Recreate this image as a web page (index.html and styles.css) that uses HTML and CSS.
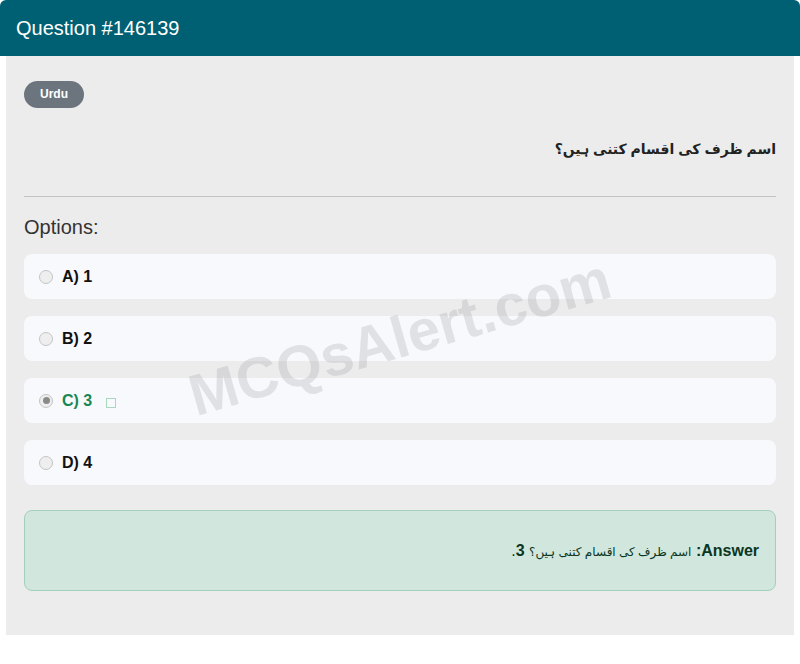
FILE: index.html
```html
<!DOCTYPE html>
<html lang="en">
<head>
<meta charset="utf-8">
<title>Question #146139</title>
<link rel="stylesheet" href="styles.css">
</head>
<body>
<div class="card">
  <div class="card-header">Question #146139</div>
  <div class="card-body">
    <span class="badge">Urdu</span>
    <h2 class="question" dir="rtl">اسم ظرف کی اقسام کتنی ہیں؟</h2>
    <hr class="divider">
    <div class="options-title">Options:</div>
    <div class="options">
      <label class="option"><span class="radio"></span><span class="opt-text">A) 1</span></label>
      <label class="option"><span class="radio"></span><span class="opt-text">B) 2</span></label>
      <label class="option correct"><span class="radio checked"></span><span class="opt-text">C) 3</span><span class="tofu"></span></label>
      <label class="option"><span class="radio"></span><span class="opt-text">D) 4</span></label>
    </div>
    <div class="answer" dir="rtl"><p class="answer-line"><strong>Answer:</strong> <span class="answer-ur">اسم ظرف کی اقسام کتنی ہیں؟</span> <strong>3</strong>.</p></div>
    <div class="watermark">MCQsAlert.com</div>
  </div>
  <div class="card-foot"></div>
</div>
</body>
</html>
```
FILE: styles.css
```css
html, body {
  margin: 0;
  padding: 0;
  background: #ffffff;
  font-family: "Liberation Sans", Arial, "DejaVu Sans", sans-serif;
}
.card {
  width: 800px;
}
.card-header {
  height: 56px;
  box-sizing: border-box;
  background: #006073;
  color: #ffffff;
  font-size: 20px;
  padding: 17px 16px 0;
  border-radius: 6px 6px 0 0;
}
.card-body {
  position: relative;
  margin: 0 6px;
  background: #ececec;
  padding: 25px 18px 44px;
  overflow: hidden;
}
.badge {
  display: inline-block;
  background: #6c757d;
  color: #fff;
  font-size: 12px;
  font-weight: bold;
  width: 60px;
  height: 27px;
  line-height: 27px;
  text-align: center;
  border-radius: 14px;
}
.question {
  margin: 26px 0 0;
  font-size: 14px;
  font-weight: bold;
  color: #222;
  text-align: right;
  line-height: 30px;
}
.divider {
  border: 0;
  border-top: 1px solid #c4c4c4;
  margin: 32px 0 0;
}
.options-title {
  margin-top: 18px;
  font-size: 20px;
  color: #333;
  line-height: 24px;
}
.options {
  margin-top: 15px;
  display: flex;
  flex-direction: column;
  gap: 17px;
}
.option {
  display: flex;
  align-items: center;
  height: 45px;
  background: #f8f9fc;
  border-radius: 8px;
  padding-left: 15px;
  font-weight: bold;
  font-size: 16px;
  color: #111;
}
.radio {
  width: 14px;
  height: 14px;
  border-radius: 50%;
  border: 1px solid #c4c4c4;
  background: #eeeeee;
  box-sizing: border-box;
  margin-right: 9px;
  display: flex;
  align-items: center;
  justify-content: center;
}
.radio.checked::after {
  content: "";
  width: 7px;
  height: 7px;
  border-radius: 50%;
  background: #8a8a8a;
}
.correct .opt-text {
  color: #198754;
}
.tofu {
  width: 8px;
  height: 8px;
  border: 1px solid #a8d8bd;
  margin-left: 14px;
  margin-top: 4px;
}
.answer {
  margin-top: 25px;
  background: #d1e7dd;
  border: 1px solid #a3cfbb;
  border-radius: 8px;
  height: 81px;
  box-sizing: border-box;
  padding: 0 16px;
  display: flex;
  align-items: center;
  color: #0a3622;
}
.answer-line {
  margin: 0;
  font-size: 16px;
}
.answer-ur {
  font-size: 12px;
}
.watermark {
  position: absolute;
  left: 176px;
  top: 247px;
  font-size: 58px;
  font-weight: bold;
  color: rgba(140, 142, 150, 0.22);
  transform: rotate(-16deg);
  transform-origin: center;
  pointer-events: none;
  white-space: nowrap;
}
.card-foot {
  height: 6px;
}
```
